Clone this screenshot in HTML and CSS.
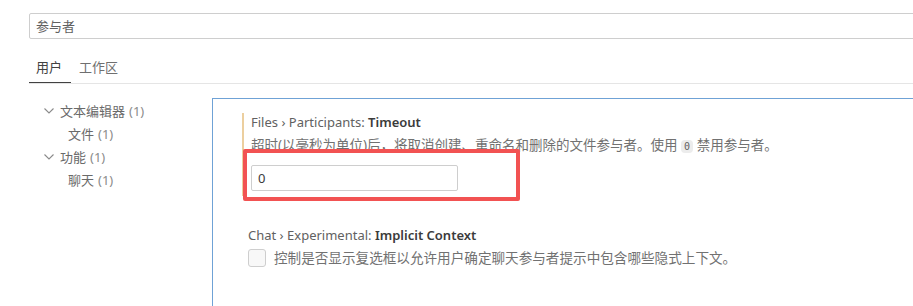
FILE: index.html
```html
<!DOCTYPE html>
<html lang="zh-CN">
<head>
<meta charset="utf-8">
<title>设置</title>
<link rel="stylesheet" href="styles.css">
</head>
<body>
<div class="page">
  <div class="search"><span class="search-text">参与者</span></div>
  <div class="tabs">
    <div class="tab active">用户</div>
    <div class="tab">工作区</div>
  </div>
  <div class="main">
    <div class="tree">
      <div class="row parent">
        <svg class="chev" width="10" height="6" viewBox="0 0 10 6"><path d="M0.5 0.5 L5 5 L9.5 0.5" fill="none" stroke="#8a8a8a" stroke-width="1.1"/></svg>
        <span>文本编辑器</span><span class="count">(1)</span>
      </div>
      <div class="row child"><span>文件</span><span class="count">(1)</span></div>
      <div class="row parent">
        <svg class="chev" width="10" height="6" viewBox="0 0 10 6"><path d="M0.5 0.5 L5 5 L9.5 0.5" fill="none" stroke="#8a8a8a" stroke-width="1.1"/></svg>
        <span>功能</span><span class="count">(1)</span>
      </div>
      <div class="row child"><span>聊天</span><span class="count">(1)</span></div>
    </div>
    <div class="panel">
      <div class="item modified">
        <div class="title"><span class="cat">Files › Participants: </span><span class="label">Timeout</span></div>
        <div class="desc">超时(以毫秒为单位)后，将取消创建、重命名和删除的文件参与者。使用 <code class="code">0</code> 禁用参与者。</div>
        <div class="input">0</div>
      </div>
      <div class="item second">
        <div class="title"><span class="cat">Chat › Experimental: </span><span class="label">Implicit Context</span></div>
        <div class="check-row">
          <span class="checkbox"></span>
          <span class="desc-inline">控制是否显示复选框以允许用户确定聊天参与者提示中包含哪些隐式上下文。</span>
        </div>
      </div>
    </div>
  </div>
  <div class="annotation"></div>
</div>
</body>
</html>
```

FILE: styles.css
```css
html, body {
  margin: 0;
  padding: 0;
  background: #ffffff;
  overflow: hidden;
}
body {
  font-family: "Noto Sans", "Noto Sans CJK SC", sans-serif;
  font-size: 13px;
  color: #616161;
  width: 913px;
  height: 306px;
}
.page {
  position: relative;
  width: 913px;
  height: 306px;
  overflow: hidden;
}
.search {
  margin: 13px 0 0 29px;
  width: 900px;
  height: 24px;
  border: 1px solid #cecece;
  border-radius: 2px;
  display: flex;
  align-items: center;
  padding-left: 6px;
  box-sizing: content-box;
}
.search-text {
  color: #616161;
  line-height: 18px;
}
.tabs {
  display: flex;
  margin-left: 29px;
  border-bottom: 1px solid #e5e5e5;
}
.tab {
  padding: 19px 8px 6px 7px;
  line-height: 18px;
  color: #6f6f6f;
  border-bottom: 1px solid transparent;
  margin-right: 1px;
}
.tab.active {
  color: #424242;
  border-bottom-color: #424242;
  padding-right: 9px;
}
.main {
  display: flex;
}
.tree {
  width: 212px;
  flex: none;
  padding-top: 15px;
}
.row {
  display: flex;
  align-items: center;
  height: 23px;
  color: #6a6a6a;
}
.row.parent {
  padding-left: 44px;
}
.row.child {
  padding-left: 68px;
}
.chev {
  margin-right: 6px;
  flex: none;
}
.count {
  margin-left: 4px;
  color: #8b8b8b;
}
.panel {
  flex: 1;
  margin-top: 14px;
  border-left: 1px solid #6fa2d6;
  border-top: 1px solid #6fa2d6;
  height: 300px;
  padding-top: 14px;
}
.item {
  margin-left: 29px;
}
.item.modified {
  border-left: 2px solid #eccf9f;
  padding-left: 7px;
  padding-bottom: 5px;
}
.item.second {
  margin-top: 30px;
  padding-left: 6px;
}
.title {
  line-height: 18px;
  white-space: nowrap;
}
.cat {
  color: #616161;
}
.label {
  color: #3b3b3b;
  font-weight: 600;
}
.desc {
  margin-top: 5px;
  line-height: 18px;
  font-size: 13.5px;
  color: #717171;
  white-space: nowrap;
}
.code {
  font-family: "DejaVu Sans Mono", monospace;
  font-size: 10px;
  background: #ececec;
  color: #616161;
  border-radius: 4px;
  padding: 1px 3px;
}
.input {
  margin-top: 9px;
  width: 199px;
  height: 24px;
  border: 1px solid #cecece;
  border-radius: 2px;
  padding-left: 6px;
  line-height: 24px;
  color: #3b3b3b;
}
.check-row {
  display: flex;
  align-items: center;
  margin-top: 5px;
}
.checkbox {
  width: 16px;
  height: 16px;
  border: 1px solid #cecece;
  border-radius: 3px;
  background: #f8f8f8;
  flex: none;
}
.desc-inline {
  margin-left: 8px;
  line-height: 18px;
  font-size: 13.6px;
  color: #717171;
  white-space: nowrap;
}
.annotation {
  position: absolute;
  left: 243px;
  top: 149px;
  width: 269px;
  height: 44px;
  border: 4px solid #f25252;
  border-radius: 2px;
}
```
